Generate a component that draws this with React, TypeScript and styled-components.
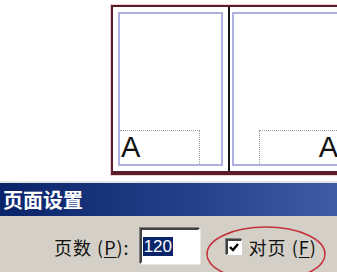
import React from 'react';
import styled, { createGlobalStyle } from 'styled-components';

const GlobalStyle = createGlobalStyle`
  html, body {
    margin: 0;
    padding: 0;
    overflow: hidden;
    background: #ffffff;
  }
`;

const Screen = styled.div`
  position: relative;
  width: 337px;
  height: 272px;
  display: flex;
  flex-direction: column;
  overflow: hidden;
  font-family: "Noto Sans CJK SC", "Liberation Sans", sans-serif;
`;

const Canvas = styled.div`
  height: 181px;
  flex-shrink: 0;
  background: #ffffff;
  padding: 5px 0 0 111px;
  box-sizing: border-box;
  overflow: hidden;
`;

const Spread = styled.div`
  display: flex;
  width: 240px;
  height: 170px;
  box-sizing: border-box;
  border: 2px solid #5a1c28;
  border-bottom-width: 4px;
  box-shadow: 0 0 0 1px #ecd2d6;
`;

const Sheet = styled.div<{ $side: 'left' | 'right' }>`
  flex-shrink: 0;
  width: ${({ $side }) => ($side === 'left' ? '115px' : '116px')};
  box-sizing: border-box;
  padding: ${({ $side }) => ($side === 'left' ? '5px' : '5px 3px 5px 2px')};
  background: #ffffff;
  border-left: ${({ $side }) => ($side === 'right' ? '2px solid #151515' : 'none')};
`;

const MarginBox = styled.div<{ $side: 'left' | 'right' }>`
  height: 100%;
  box-sizing: border-box;
  border: 2px solid #b0b0e0;
  display: flex;
  align-items: flex-end;
  justify-content: ${({ $side }) => ($side === 'left' ? 'flex-start' : 'flex-end')};
`;

const TextFrame = styled.div<{ $side: 'left' | 'right' }>`
  width: 80px;
  height: 34px;
  box-sizing: border-box;
  border-top: 1px dotted #9a9a9a;
  border-left: ${({ $side }) => ($side === 'right' ? '1px dotted #9a9a9a' : 'none')};
  border-right: ${({ $side }) => ($side === 'left' ? '1px dotted #9a9a9a' : 'none')};
  display: flex;
  align-items: center;
  justify-content: ${({ $side }) => ($side === 'left' ? 'flex-start' : 'flex-end')};
  padding: 0 1px;
  font-family: "Liberation Sans", Arial, sans-serif;
  font-size: 29px;
  line-height: 1;
  color: #111111;
`;

const TitleBar = styled.div`
  height: 35px;
  flex-shrink: 0;
  box-sizing: border-box;
  border-top: 2px solid #e4e4e4;
  background: linear-gradient(90deg, #0a246a 0%, #243f88 55%, #3e5ca4 100%);
  display: flex;
  align-items: center;
  padding-left: 3px;
  color: #ffffff;
  font-size: 20px;
  font-weight: 700;
`;

const Body = styled.div`
  flex: 1;
  background: #d4d0c8;
  display: flex;
  align-items: flex-start;
  padding: 12px 0 0 54px;
  color: #111111;
  font-size: 18px;
`;

const Label = styled.span<{ $gap: number }>`
  white-space: nowrap;
  line-height: 24px;
  letter-spacing: 1px;
  margin-top: 7px;
  margin-right: ${({ $gap }) => $gap}px;
  u {
    text-decoration: underline;
    text-underline-offset: 2px;
  }
`;

const NumberField = styled.div`
  width: 60px;
  height: 36px;
  box-sizing: border-box;
  background: #ffffff;
  border-top: 2px solid #404040;
  border-left: 2px solid #404040;
  border-bottom: 2px solid #ffffff;
  border-right: 2px solid #ffffff;
  box-shadow: -1px -1px 0 #808080, 1px 1px 0 #e8e6e2;
  padding: 1px 0 0 1px;
  margin-right: 26px;
`;

const Selected = styled.span`
  display: inline-block;
  background: #0a246a;
  color: #ffffff;
  font-family: "Liberation Sans", Arial, sans-serif;
  font-size: 17px;
  line-height: 19px;
  padding: 0 1px;
`;

const CheckBox = styled.div`
  width: 16px;
  height: 16px;
  margin-top: 11px;
  box-sizing: border-box;
  background: #ffffff;
  border-top: 2px solid #404040;
  border-left: 2px solid #404040;
  border-bottom: 1px solid #ffffff;
  border-right: 1px solid #ffffff;
  box-shadow: -1px -1px 0 #808080;
  display: flex;
  align-items: center;
  justify-content: center;
  margin-right: 7px;
`;

const Highlight = styled.svg`
  position: absolute;
  left: 205px;
  top: 226px;
  overflow: visible;
`;

const App: React.FC = () => {
  return (
    <Screen>
      <GlobalStyle />
      <Canvas>
        <Spread>
          <Sheet $side="left">
            <MarginBox $side="left">
              <TextFrame $side="left">A</TextFrame>
            </MarginBox>
          </Sheet>
          <Sheet $side="right">
            <MarginBox $side="right">
              <TextFrame $side="right">A</TextFrame>
            </MarginBox>
          </Sheet>
        </Spread>
      </Canvas>

      <TitleBar>页面设置</TitleBar>

      <Body>
        <Label $gap={10}>
          页数 (<u>P</u>):
        </Label>
        <NumberField>
          <Selected>120</Selected>
        </NumberField>
        <CheckBox>
          <svg width="10" height="9" viewBox="0 0 10 9">
            <path d="M1 4 L4 7 L9 1" fill="none" stroke="#000" strokeWidth="2.4" />
          </svg>
        </CheckBox>
        <Label $gap={0}>
          对页 (<u>F</u>)
        </Label>
      </Body>

      <Highlight width="124" height="56" viewBox="0 0 124 56">
        <ellipse cx="61" cy="28" rx="59" ry="27" fill="none" stroke="#c4303a" strokeWidth="1.6" />
      </Highlight>
    </Screen>
  );
};

export default App;
